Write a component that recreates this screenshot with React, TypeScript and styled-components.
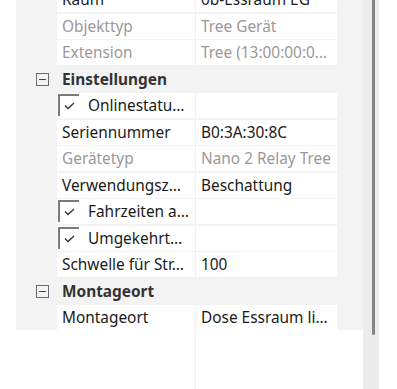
import React from 'react'
import styled, { createGlobalStyle } from 'styled-components'

const GlobalStyle = createGlobalStyle`
html, body {
  margin: 0;
  padding: 0;
  background: #ffffff;
}
body {
  font-family: "Noto Sans", "Open Sans", sans-serif;
  font-size: 15.4px;
}
`

const Page = styled.div`
display: flex;
height: 389px;
padding-left: 16px;
overflow: hidden;
`

const Panel = styled.div`
width: 347px;
display: flex;
flex-direction: column;
`

const Grid = styled.div`
background: #f3f3f3;
padding-right: 26px;
display: flex;
flex-direction: column;
gap: 1.5px;
margin-top: -13px;
`

const Row = styled.div`
display: grid;
grid-template-columns: 41px 138px 142px;
height: 25px;
`

const Gutter = styled.div`
display: flex;
align-items: center;
justify-content: flex-end;
padding-right: 8px;
`

const Cell = styled.div<{ $muted?: boolean }>`
background: #ffffff;
display: flex;
align-items: center;
padding-left: 5px;
color: ${p => (p.$muted ? '#9d9897' : '#1a1a1a')};
white-space: nowrap;
overflow: hidden;
`

const ValueCell = styled(Cell)`
border-left: 1px solid #f0f0f0;
background-clip: padding-box;
`

const CheckCell = styled(Cell)`
align-items: flex-start;
padding-left: 1px;
gap: 9px;
`

const CheckLabel = styled.span`
align-self: center;
`

const Box = styled.span`
width: 19px;
height: 20px;
margin-top: 1px;
border-top: 2px solid #7a7a7a;
border-left: 2px solid #7a7a7a;
display: flex;
align-items: center;
justify-content: center;
flex-shrink: 0;
`

const Category = styled.div`
grid-column: 2 / 4;
display: flex;
align-items: center;
padding-left: 5px;
font-weight: 700;
color: #333333;
`

const Toggle = styled.span`
width: 11px;
height: 11px;
border: 1px solid #6a6a6a;
display: flex;
align-items: center;
justify-content: center;
&::after {
  content: '';
  width: 7px;
  height: 1px;
  background: #4a4a4a;
}
`

const Filler = styled.div`
flex: 1;
display: grid;
grid-template-columns: 179px 1px;
`

const FillerLine = styled.div`
grid-column: 2;
background: #f1f1f1;
`

const Scrollbar = styled.div`
width: 16px;
background: #ececec;
position: relative;
`

const Thumb = styled.div`
position: absolute;
left: 9px;
top: 0;
width: 3px;
height: 335px;
border-radius: 0 0 2px 2px;
background: #858585;
`

type Prop =
  | { kind: 'prop'; name: string; value: string; muted?: boolean }
  | { kind: 'check'; name: string }
  | { kind: 'cat'; name: string }

const rows: Prop[] = [
  { kind: 'prop', name: 'Raum', value: '0b-Essraum EG' },
  { kind: 'prop', name: 'Objekttyp', value: 'Tree Gerät', muted: true },
  { kind: 'prop', name: 'Extension', value: 'Tree (13:00:00:0…', muted: true },
  { kind: 'cat', name: 'Einstellungen' },
  { kind: 'check', name: 'Onlinestatu…' },
  { kind: 'prop', name: 'Seriennummer', value: 'B0:3A:30:8C' },
  { kind: 'prop', name: 'Gerätetyp', value: 'Nano 2 Relay Tree', muted: true },
  { kind: 'prop', name: 'Verwendungsz…', value: 'Beschattung' },
  { kind: 'check', name: 'Fahrzeiten a…' },
  { kind: 'check', name: 'Umgekehrt…' },
  { kind: 'prop', name: 'Schwelle für Str…', value: '100' },
  { kind: 'cat', name: 'Montageort' },
  { kind: 'prop', name: 'Montageort', value: 'Dose Essraum li…' },
]

const CheckMark = () => (
  <svg width="11" height="8" viewBox="0 0 11 8">
    <polyline points="1,3.5 4,6.5 10,1" fill="none" stroke="#333" strokeWidth="1.3" />
  </svg>
)

const App = () => {
  return (
    <>
      <GlobalStyle />
      <Page>
        <Panel>
          <Grid>
            {rows.map((r, i) => {
              if (r.kind === 'cat') {
                return (
                  <Row key={i}>
                    <Gutter><Toggle /></Gutter>
                    <Category>{r.name}</Category>
                  </Row>
                )
              }
              if (r.kind === 'check') {
                return (
                  <Row key={i}>
                    <Gutter />
                    <CheckCell>
                      <Box><CheckMark /></Box>
                      <CheckLabel>{r.name}</CheckLabel>
                    </CheckCell>
                    <ValueCell />
                  </Row>
                )
              }
              return (
                <Row key={i}>
                  <Gutter />
                  <Cell $muted={r.muted}>{r.name}</Cell>
                  <ValueCell $muted={r.muted}>{r.value}</ValueCell>
                </Row>
              )
            })}
          </Grid>
          <Filler>
            <FillerLine />
          </Filler>
        </Panel>
        <Scrollbar>
          <Thumb />
        </Scrollbar>
      </Page>
    </>
  )
}

export default App
